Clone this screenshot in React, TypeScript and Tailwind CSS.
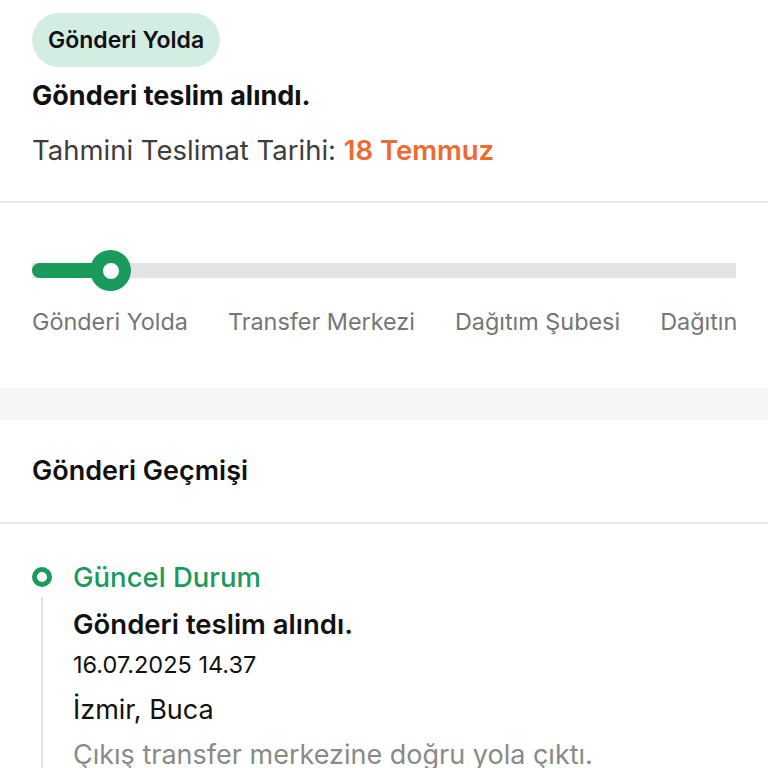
import React from 'react'

const steps = ['Gönderi Yolda', 'Transfer Merkezi', 'Dağıtım Şubesi', 'Dağıtında']

function ProgressTrack() {
  return (
    <div className="relative flex h-[40px] items-center">
      <div className="flex h-[15px] w-full bg-[#e4e4e4]">
        <div className="h-full w-[80px] rounded-l-full bg-[#1a9a5b]" />
      </div>
      {/* knob sits over the track */}
      <div className="absolute left-[58px] top-0 flex h-[41px] w-[41px] items-center justify-center rounded-full bg-[#1a9a5b]">
        <div className="h-[16px] w-[16px] rounded-full bg-white" />
      </div>
    </div>
  )
}

export default function App() {
  return (
    <div className="min-h-screen bg-white text-[#111]" style={{ fontFamily: 'Inter, "Noto Sans", sans-serif' }}>
      {/* summary */}
      <section className="flex flex-col items-start px-8 pt-[13px] pb-[34px]">
        <div className="flex h-[54px] items-center rounded-full bg-[#d3ede2] px-4 text-[23px] font-semibold">
          Gönderi Yolda
        </div>
        <h1 className="mt-[12px] text-[27px] font-bold leading-[34px]">Gönderi teslim alındı.</h1>
        <p className="mt-[20px] text-[27.5px] leading-[34px] text-[#3d3d3d]">
          Tahmini Teslimat Tarihi: <span className="font-semibold text-[#f0692f]">18 Temmuz</span>
        </p>
      </section>

      {/* progress */}
      <section className="border-t-2 border-[#e8e8e8] px-8 pt-[47px] pb-[50px] shadow-[0_4px_6px_rgba(0,0,0,0.05)]">
        <ProgressTrack />
        <div className="mt-[16px] flex gap-[40px] overflow-hidden whitespace-nowrap text-[23.4px] leading-[32px] text-[#767676]">
          {steps.map(s => (
            <span key={s}>{s}</span>
          ))}
        </div>
      </section>

      <div className="h-[32px] bg-[#f6f6f6]" />

      {/* history */}
      <section>
        <h2 className="border-b-2 border-[#e8e8e8] px-8 pt-[34px] pb-[34px] text-[27px] font-semibold leading-[34px]">
          Gönderi Geçmişi
        </h2>
        <div className="flex gap-[21px] px-8 pt-[37px]">
          <div className="flex w-[20px] flex-col items-center">
            <div className="flex h-[32px] items-center">
              <div className="h-[20px] w-[20px] rounded-full border-[5px] border-[#1a9a5b] bg-white" />
            </div>
            <div className="mt-[4px] w-[2px] flex-1 bg-[#e3e3e3]" />
          </div>
          <div className="flex flex-col">
            <div className="text-[27.5px] font-medium leading-[32px] text-[#1a9a5b]">Güncel Durum</div>
            <div className="mt-[15px] text-[27.5px] font-semibold leading-[32px]">Gönderi teslim alındı.</div>
            <div className="mt-[11px] text-[23.5px] leading-[28px]">16.07.2025 14.37</div>
            <div className="mt-[15px] text-[27px] leading-[32px]">İzmir, Buca</div>
            <div className="mt-[13px] whitespace-nowrap text-[27px] leading-[32px] text-[#8a8a8a]">
              Çıkış transfer merkezine doğru yola çıktı.
            </div>
          </div>
        </div>
      </section>
    </div>
  )
}
